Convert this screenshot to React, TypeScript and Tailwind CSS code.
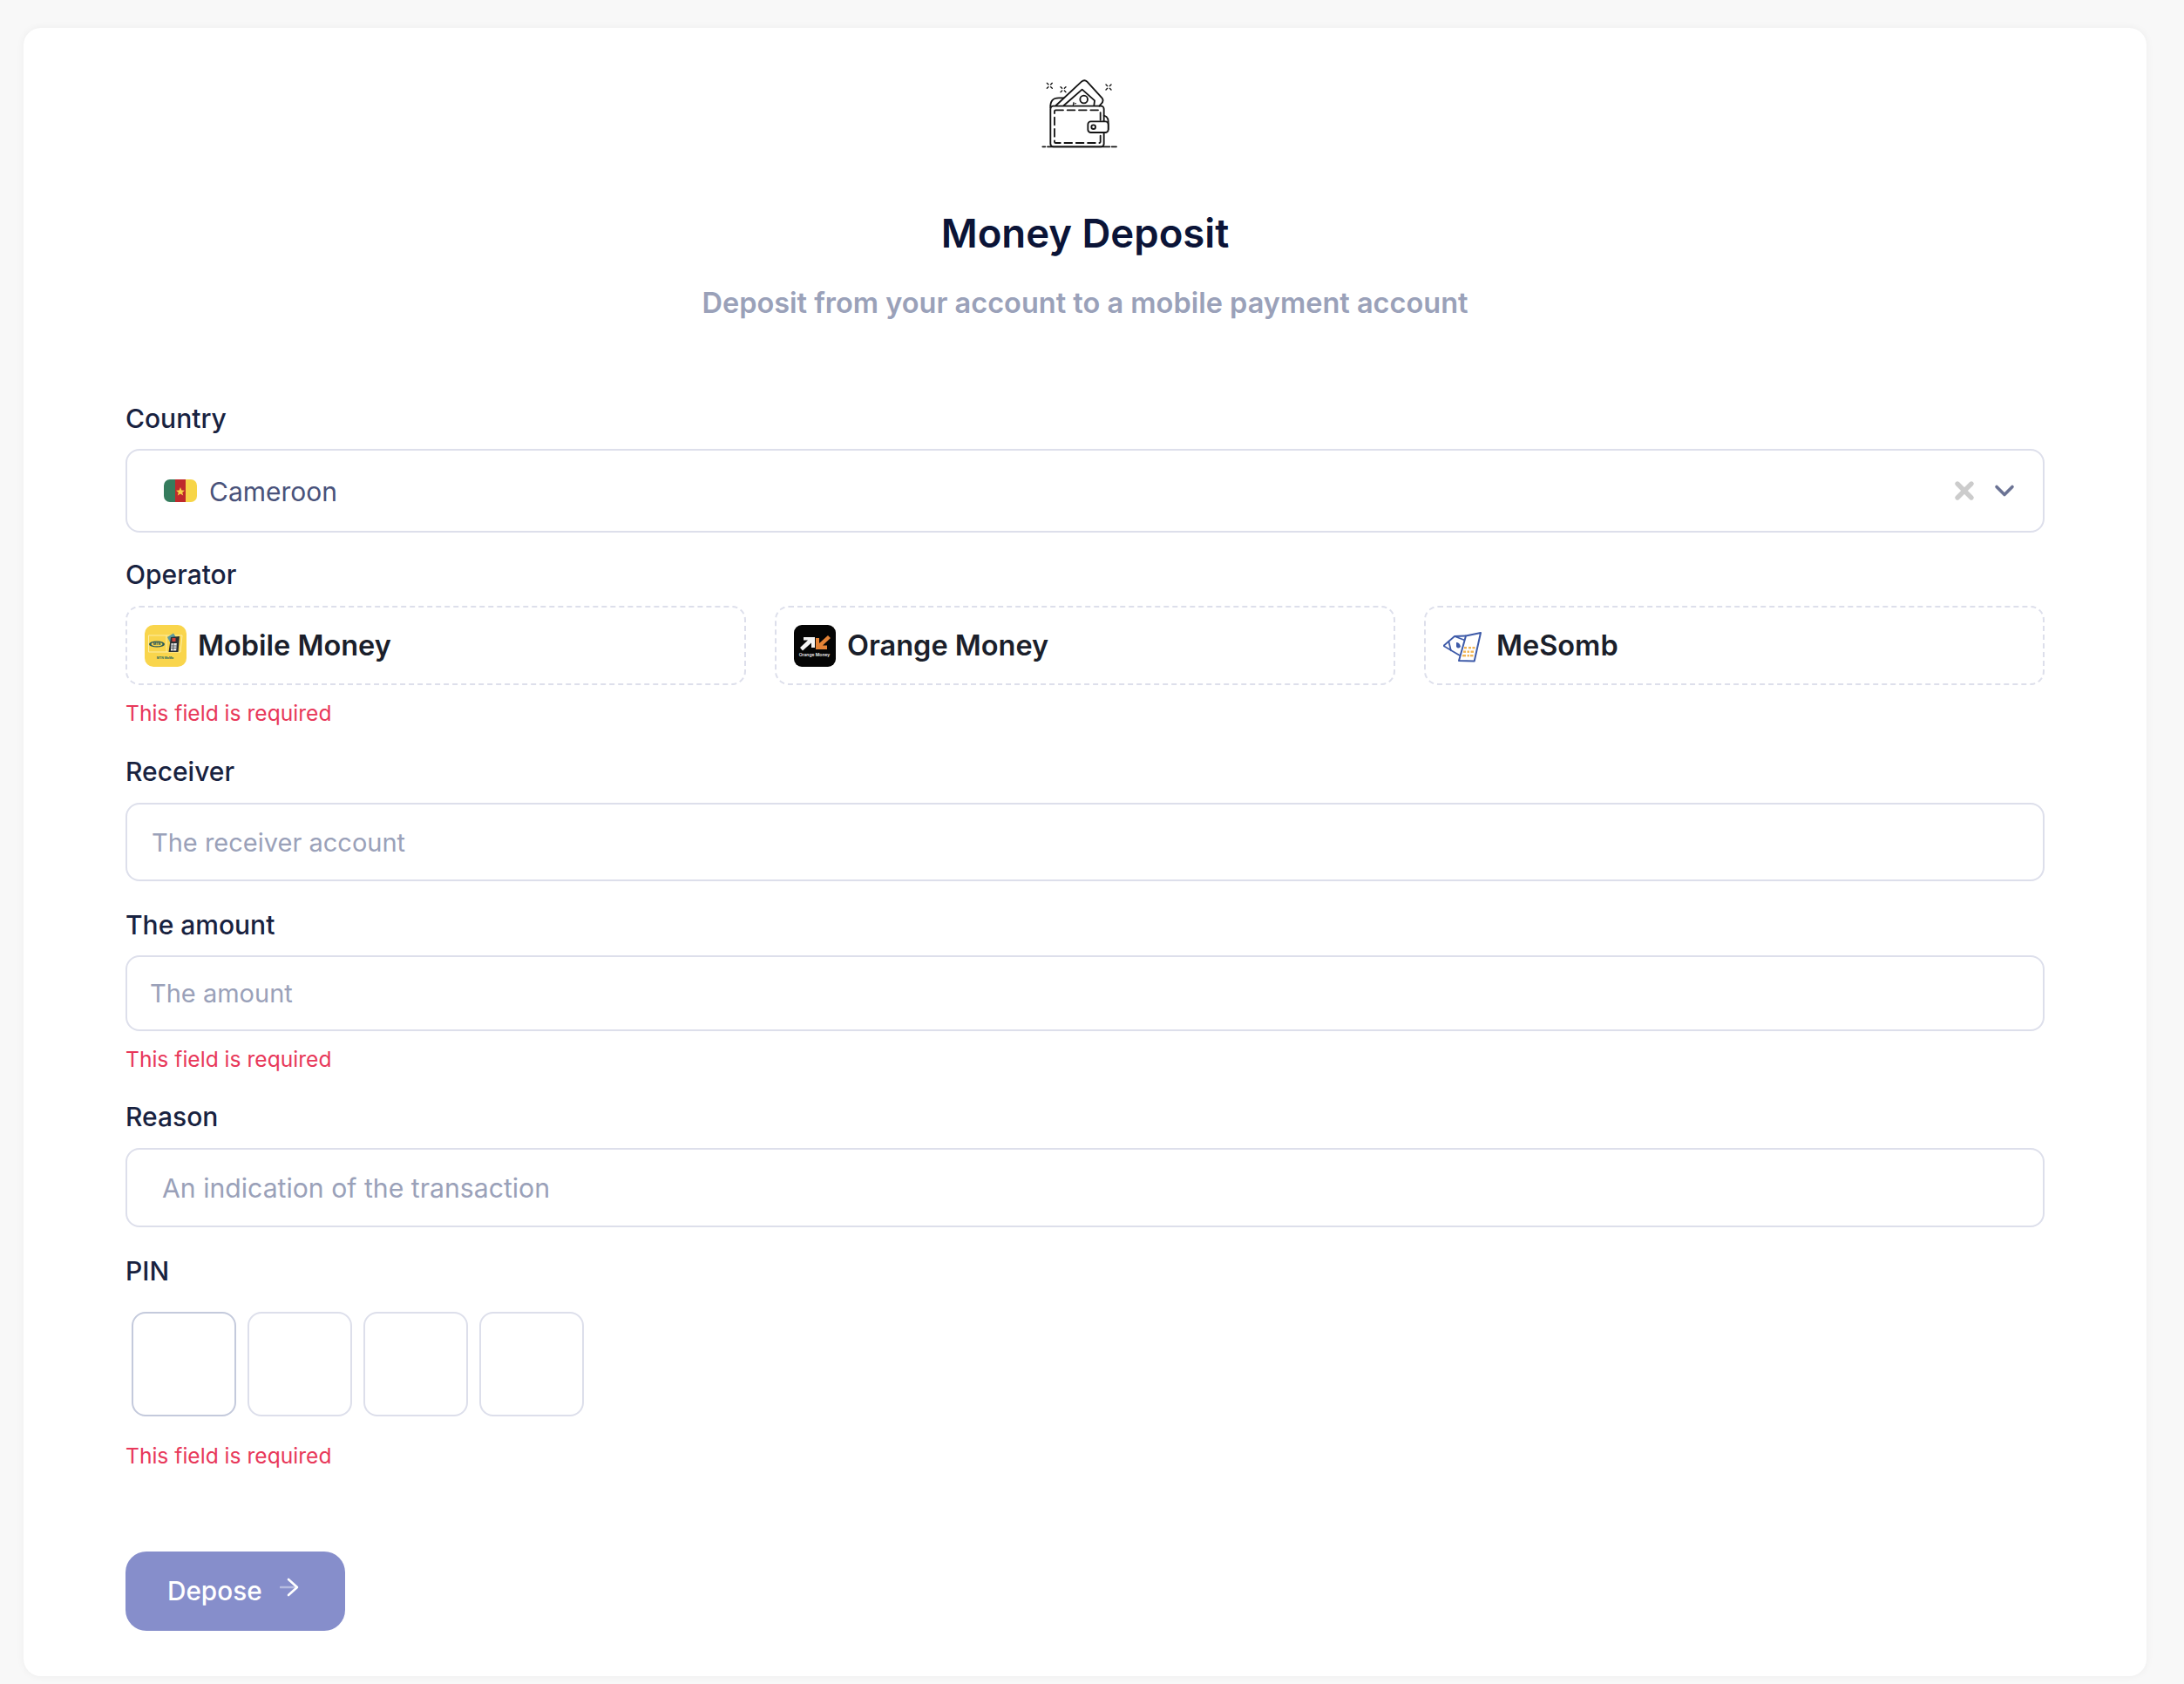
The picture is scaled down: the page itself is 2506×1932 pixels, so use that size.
import { ChevronDown, X } from "lucide-react";

function WalletIcon() {
  return (
    <svg viewBox="285 90 300 240" className="w-[100px] h-[80px] mx-auto" fill="none" stroke="#141414" strokeWidth="5.5" strokeLinecap="round" strokeLinejoin="round">
      <path d="M316 190 Q314 157 345 157 L362 157" />
      <path d="M335 183 L423 101 Q433 92 442 101 L494 158 Q501 168 490 178 L484 185" />
      <path d="M362 183 L425 128 L468 166 L466 183" />
      <circle cx="431" cy="162" r="13" />
      <path d="M396 172 L394 182 M394 178 L404 176" strokeWidth="3" />
      <rect x="316" y="185" width="184" height="140" rx="10" />
      <rect x="330" y="199" width="158" height="113" rx="4" strokeDasharray="26 14" />
      <path d="M500 218 Q515 222 515 238 L515 265" />
      <rect x="445" y="238" width="70" height="38" rx="10" fill="#fff" />
      <circle cx="464" cy="257" r="7" />
      <path d="M289 325 L298 325 M306 325 L520 325 M527 325 L543 325" />
      <path d="M304 106 L309 111 M322 106 L317 111 M304 124 L309 119 M322 124 L317 119" strokeWidth="4" />
      <path d="M351 119 L356 124 M369 119 L364 124 M351 137 L356 132 M369 137 L364 132" strokeWidth="4" />
      <path d="M507 111 L512 116 M525 111 L520 116 M507 129 L512 124 M525 129 L520 124" strokeWidth="4" />
    </svg>
  );
}

function CameroonFlag() {
  return (
    <svg viewBox="0 0 38 26" className="w-[38px] h-[26px] shrink-0">
      <defs>
        <clipPath id="flagClip">
          <rect width="38" height="26" rx="7" />
        </clipPath>
      </defs>
      <g clipPath="url(#flagClip)">
        <rect width="13" height="26" fill="#357c5d" />
        <rect x="13" width="12" height="26" fill="#bf2a2c" />
        <rect x="25" width="13" height="26" fill="#f7d548" />
      </g>
      <path d="M19 9 L20.4 12.6 L24 12.8 L21.2 15 L22.2 18.5 L19 16.5 L15.8 18.5 L16.8 15 L14 12.8 L17.6 12.6 Z" fill="#f7d548" />
    </svg>
  );
}

function MtnLogo() {
  return (
    <svg viewBox="0 0 48 48" className="w-[48px] h-[48px] shrink-0">
      <rect width="48" height="48" rx="10" fill="#f9d54c" />
      <path d="M4.5 12 H25 V31 H4.5 Z" fill="none" stroke="#fdeea6" strokeWidth="1" />
      <path d="M25 12 H43 L41 31 H25" fill="none" stroke="#fdeea6" strokeWidth="1" />
      <ellipse cx="14" cy="22" rx="9" ry="3.6" fill="#27585a" />
      <ellipse cx="14" cy="22" rx="6.5" ry="2.3" fill="#f9d54c" />
      <text x="14" y="23.4" fontSize="3.6" fontWeight="800" fill="#27585a" textAnchor="middle" fontFamily="Inter, sans-serif">MTN</text>
      <path d="M26 14 L33 9.5 L37 16 L29 20 Z" fill="#5b9aa0" />
      <path d="M30 14 L40 13 L38.5 31 L27.5 31 Z" fill="#2a2f33" />
      <rect x="31.5" y="15" width="4" height="4" fill="#d3403a" />
      <path d="M30.5 21 H36.8 L36.2 29.5 H30 Z" fill="#e8e8e8" />
      <path d="M30.4 24 H36.6 M30.2 26.5 H36.4 M33 21 L32.6 29.5" stroke="#2a2f33" strokeWidth="0.7" />
      <text x="23.5" y="38.6" fontSize="3.4" fontWeight="700" fill="#2c6a5e" textAnchor="middle" fontFamily="Inter, sans-serif">MTN MoMo</text>
    </svg>
  );
}

function OrangeLogo() {
  return (
    <svg viewBox="0 0 48 48" className="w-[48px] h-[48px] shrink-0">
      <rect width="48" height="48" rx="9" fill="#050505" />
      <path d="M7 26 L16 17.5 L11 17.5 L11 14 L24 14 L24 26 L20 26 L20 20.5 L10 29.5 Z" fill="#f4f4f4" />
      <path d="M42 15 L33 23.5 L38 23.5 L38 28 L25 28 L25 15 L29 15 L29 21 L39 12 Z" fill="#e58336" />
      <text x="23.5" y="35.6" fontSize="5" fontWeight="600" fill="#ededed" textAnchor="middle" fontFamily="Inter, sans-serif">Orange Money</text>
    </svg>
  );
}

function MesombLogo() {
  return (
    <svg viewBox="-2 0 48 40" className="w-[48px] h-[40px] shrink-0" fill="none" stroke="#3d5aa8" strokeWidth="1.8" strokeLinejoin="round">
      <path d="M-1.7 20 L11 9 L24 8.5" />
      <path d="M-1.7 20 L17 31" />
      <path d="M4.3 14.8 L7 26" />
      <path d="M11 9 L24 14" />
      <path d="M13 16 Q17 16 18 21 Q15 24 13 21 Z" fill="#3d5aa8" stroke="none" />
      <path d="M24 8.5 L41 5 L33.7 37.5 L16 37 Z" fill="#fff" strokeWidth="2" />
      <g fill="#f2b655" stroke="none">
        <rect x="22" y="21" width="3" height="2.4" />
        <rect x="27" y="21" width="3" height="2.4" />
        <rect x="31.5" y="21" width="3" height="2.4" />
        <rect x="21" y="25.5" width="3" height="2.4" />
        <rect x="25.5" y="25.5" width="2.5" height="2.4" />
        <rect x="29.5" y="25.5" width="3.5" height="2.4" />
        <rect x="20" y="30" width="4" height="2.4" />
        <rect x="25.5" y="30" width="2.5" height="2.4" />
        <rect x="29" y="30" width="3.5" height="2.4" />
      </g>
    </svg>
  );
}

function FieldError() {
  return <p className="text-[24.6px] leading-[32px] text-[#e8385a]">This field is required</p>;
}

const operators = [
  { name: "Mobile Money", logo: <MtnLogo /> },
  { name: "Orange Money", logo: <OrangeLogo /> },
  { name: "MeSomb", logo: <MesombLogo /> },
];

export default function App() {
  const labelClass = "block text-[30px] leading-[36px] font-medium text-[#182240]";
  const inputClass =
    "block w-full border-2 border-[#dddfeb] rounded-[16px] bg-white text-[29px] text-[#49527a] placeholder:text-[#9aa1b9] outline-none";

  return (
    <div className="min-h-screen bg-[#f8f8f8] pt-[32px] pb-[9px] pl-[27px] pr-[43px] font-['Inter',sans-serif]">
      <div className="h-[1891px] rounded-[20px] bg-white shadow-[0_0_10px_rgba(0,0,0,0.05)] pt-[58px] px-[117px]">
        <WalletIcon />
        <h1 className="mt-[66px] text-center text-[45.5px] leading-[64px] font-semibold text-[#0b1437]">Money Deposit</h1>
        <p className="mt-[28px] text-center text-[32.5px] leading-[40px] font-semibold text-[#9aa1b9]">
          Deposit from your account to a mobile payment account
        </p>

        <label className={`${labelClass} mt-[94px]`}>Country</label>
        <div className="mt-[17px] h-[96px] flex items-center border-2 border-[#dddfeb] rounded-[16px] pl-[42px] pr-[26px]">
          <CameroonFlag />
          <span className="ml-[14px] pt-[2px] text-[30px] text-[#49527a]">Cameroon</span>
          <X className="ml-auto w-[32px] h-[32px] text-[#cccccc]" strokeWidth={4} />
          <ChevronDown className="ml-[12px] w-[36px] h-[36px] text-[#6b7394]" strokeWidth={2.4} />
        </div>

        <label className={`${labelClass} mt-[30px]`}>Operator</label>
        <div className="mt-[18px] grid grid-cols-3 gap-[33px]">
          {operators.map((op) => (
            <div
              key={op.name}
              className="h-[91px] flex items-center gap-[13px] pl-[20px] border-2 border-dashed border-[#dddfeb] rounded-[16px]"
            >
              {op.logo}
              <span className="pt-[2px] text-[32.5px] font-semibold text-[#1b1f2b]">{op.name}</span>
            </div>
          ))}
        </div>
        <div className="mt-[16px]">
          <FieldError />
        </div>

        <label className={`${labelClass} mt-[33px]`}>Receiver</label>
        <input className={`${inputClass} mt-[18px] h-[90px] pl-[28px]`} placeholder="The receiver account" />

        <label className={`${labelClass} mt-[32px]`}>The amount</label>
        <input className={`${inputClass} mt-[17px] h-[87px] pl-[26px]`} placeholder="The amount" />
        <div className="mt-[16px]">
          <FieldError />
        </div>

        <label className={`${labelClass} mt-[32px]`}>Reason</label>
        <input className={`${inputClass} mt-[18px] h-[91px] pl-[40px] text-[30.2px]`} placeholder="An indication of the transaction" />

        <label className={`${labelClass} mt-[32px]`}>PIN</label>
        <div className="mt-[29px] pl-[7px] flex gap-[13px]">
          <input className="w-[120px] h-[120px] border-2 border-[#c4cadc] rounded-[16px] outline-none" />
          <input className="w-[120px] h-[120px] border-2 border-[#dddfeb] rounded-[16px] outline-none" />
          <input className="w-[120px] h-[120px] border-2 border-[#dddfeb] rounded-[16px] outline-none" />
          <input className="w-[120px] h-[120px] border-2 border-[#dddfeb] rounded-[16px] outline-none" />
        </div>
        <div className="mt-[29px]">
          <FieldError />
        </div>

        <button className="mt-[94px] w-[252px] h-[91px] rounded-[24px] bg-[#868ecb] text-white text-[29.7px] font-medium flex items-center pl-[48px]">
          Depose
          <svg viewBox="0 0 22 22" className="ml-[20px] -mt-[10px] w-[22px] h-[22px]" fill="none" stroke="#fff" strokeWidth="2.6" strokeLinecap="round" strokeLinejoin="round">
            <path d="M1 11 H19" opacity="0.4" />
            <path d="M10 2 L20 11 L10 20" />
          </svg>
        </button>
      </div>
    </div>
  );
}
